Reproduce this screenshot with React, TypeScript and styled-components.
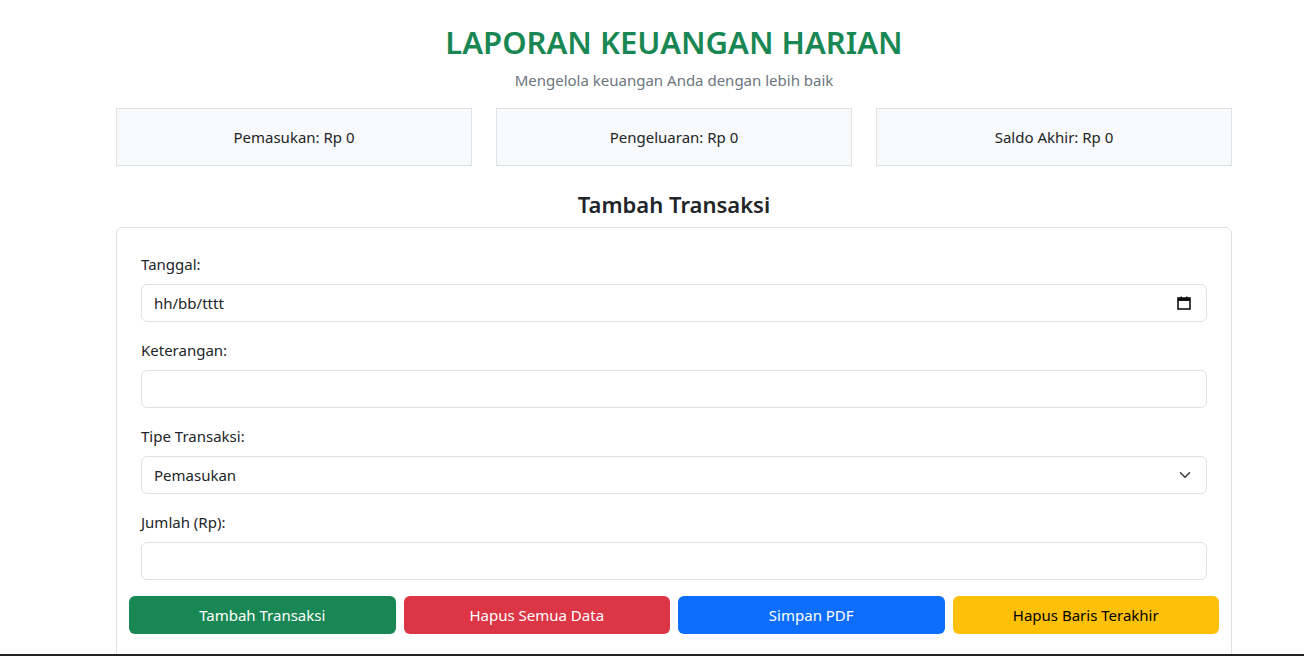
import React from "react";
import styled, { createGlobalStyle } from "styled-components";

const Global = createGlobalStyle`
  * { box-sizing: border-box; }
  body {
    margin: 0;
    font-family: "Noto Sans", "Open Sans", sans-serif;
    font-size: 16px;
    color: #212529;
    background: #fff;
  }
`;

const Page = styled.div`
  padding: 22px 0 0 44px;
`;

const Container = styled.div`
  max-width: 1116px;
  margin: 0 auto;
`;

const Title = styled.h1`
  margin: 0;
  text-align: center;
  color: #198754;
  font-size: 31px;
  font-weight: 600;
  line-height: 40px;
`;

const Subtitle = styled.p`
  margin: 7px 0 0;
  text-align: center;
  color: #6c757d;
  font-size: 15px;
  line-height: 22px;
`;

const Stats = styled.div`
  display: grid;
  grid-template-columns: repeat(3, 1fr);
  gap: 24px;
  margin-top: 17px;
`;

const StatCard = styled.div`
  height: 58px;
  display: flex;
  align-items: center;
  justify-content: center;
  background: #f8f9fa;
  border: 1px solid #dee2e6;
  font-size: 15px;
`;

const SectionTitle = styled.h3`
  margin: 22px 0 0;
  text-align: center;
  font-size: 22px;
  font-weight: 600;
  line-height: 32px;
`;

const FormCard = styled.div`
  margin-top: 7px;
  border: 1px solid #dee2e6;
  border-radius: 6px;
  padding: 24px 24px 40px;
`;

const Field = styled.div`
  margin-bottom: 16px;
`;

const Label = styled.label`
  display: block;
  font-size: 15px;
  line-height: 24px;
  margin-bottom: 8px;
`;

const InputWrap = styled.div`
  position: relative;
`;

const Input = styled.input`
  display: block;
  width: 100%;
  height: 38px;
  padding: 6px 12px;
  font: inherit;
  font-size: 15px;
  color: #212529;
  background: #fff;
  border: 1px solid #dee2e6;
  border-radius: 6px;
  outline: none;
  &::placeholder { color: #212529; }
`;

const Select = styled.select`
  display: block;
  width: 100%;
  height: 38px;
  padding: 6px 36px 6px 12px;
  font: inherit;
  font-size: 15px;
  color: #212529;
  background: #fff;
  border: 1px solid #dee2e6;
  border-radius: 6px;
  appearance: none;
  outline: none;
`;

const TrailingIcon = styled.span`
  position: absolute;
  right: 16px;
  top: 50%;
  transform: translateY(-50%);
  display: flex;
  pointer-events: none;
`;

const Buttons = styled.div`
  display: grid;
  grid-template-columns: repeat(4, 1fr);
  gap: 8px;
  margin: 0 -12px;
`;

const Button = styled.button<{ $bg: string; $fg?: string }>`
  height: 38px;
  border: none;
  border-radius: 6px;
  background: ${(p) => p.$bg};
  color: ${(p) => p.$fg ?? "#fff"};
  font: inherit;
  font-size: 15px;
  cursor: pointer;
`;

const BottomEdge = styled.div`
  position: fixed;
  left: 0;
  right: 0;
  bottom: 0;
  height: 2px;
  background: #1f2326;
`;

const CalendarIcon = () => (
  <svg width="14" height="14" viewBox="0 0 14 14">
    <rect x="1" y="2" width="12" height="11" fill="none" stroke="#111" strokeWidth="1.6" />
    <rect x="1" y="2" width="12" height="3" fill="#111" />
    <rect x="3.5" y="0.5" width="1.4" height="2" fill="#111" />
    <rect x="9.1" y="0.5" width="1.4" height="2" fill="#111" />
  </svg>
);

const Chevron = () => (
  <svg width="12" height="12" viewBox="0 0 16 16">
    <path d="M2 5l6 6 6-6" fill="none" stroke="#343a40" strokeWidth="2" strokeLinecap="round" strokeLinejoin="round" />
  </svg>
);

export default function App() {
  return (
    <Page>
      <Global />
      <Container>
        <Title>LAPORAN KEUANGAN HARIAN</Title>
        <Subtitle>Mengelola keuangan Anda dengan lebih baik</Subtitle>
        <Stats>
          <StatCard>Pemasukan: Rp 0</StatCard>
          <StatCard>Pengeluaran: Rp 0</StatCard>
          <StatCard>Saldo Akhir: Rp 0</StatCard>
        </Stats>
        <SectionTitle>Tambah Transaksi</SectionTitle>
        <FormCard>
          <Field>
            <Label>Tanggal:</Label>
            <InputWrap>
              <Input type="text" placeholder="hh/bb/tttt" />
              <TrailingIcon><CalendarIcon /></TrailingIcon>
            </InputWrap>
          </Field>
          <Field>
            <Label>Keterangan:</Label>
            <Input type="text" />
          </Field>
          <Field>
            <Label>Tipe Transaksi:</Label>
            <InputWrap>
              <Select defaultValue="Pemasukan">
                <option>Pemasukan</option>
                <option>Pengeluaran</option>
              </Select>
              <TrailingIcon><Chevron /></TrailingIcon>
            </InputWrap>
          </Field>
          <Field>
            <Label>Jumlah (Rp):</Label>
            <Input type="text" />
          </Field>
          <Buttons>
            <Button $bg="#198754">Tambah Transaksi</Button>
            <Button $bg="#dc3545">Hapus Semua Data</Button>
            <Button $bg="#0d6efd">Simpan PDF</Button>
            <Button $bg="#ffc107" $fg="#000">Hapus Baris Terakhir</Button>
          </Buttons>
        </FormCard>
      </Container>
      <BottomEdge />
    </Page>
  );
}
